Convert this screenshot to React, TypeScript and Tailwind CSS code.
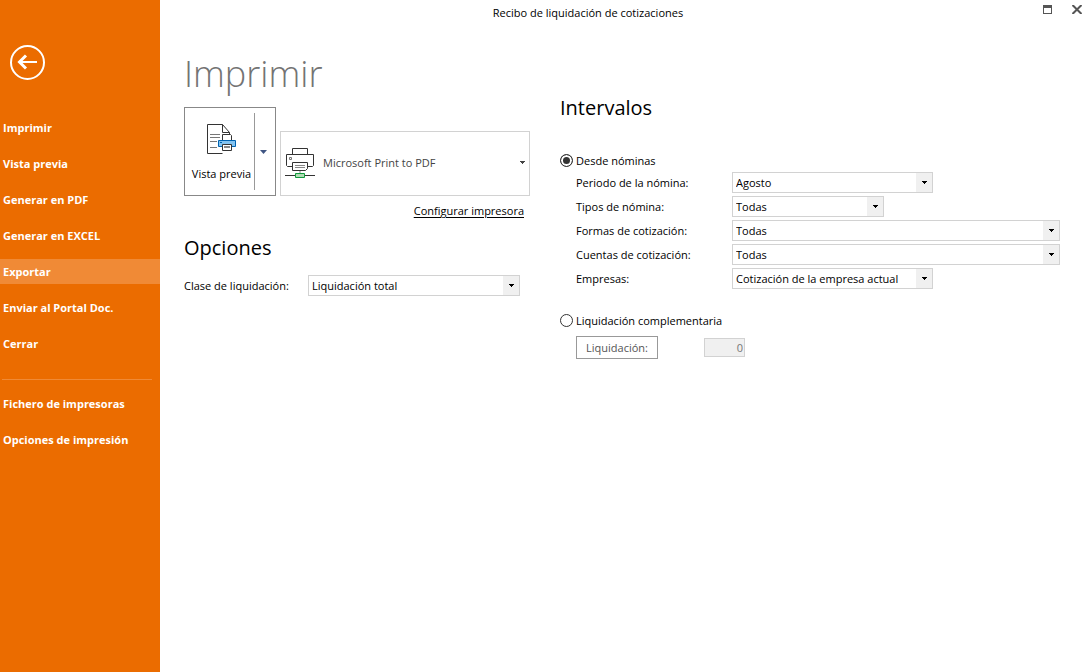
import type { ReactNode } from "react";

const mainLinks = [
  "Imprimir",
  "Vista previa",
  "Generar en PDF",
  "Generar en EXCEL",
  "Exportar",
  "Enviar al Portal Doc.",
  "Cerrar",
];

const setupLinks = ["Fichero de impresoras", "Opciones de impresión"];

const filters = [
  { id: "periodo", label: "Periodo de la nómina:", value: "Agosto", width: "w-[201px]" },
  { id: "tipos", label: "Tipos de nómina:", value: "Todas", width: "w-[152px]" },
  { id: "formas", label: "Formas de cotización:", value: "Todas", width: "w-full" },
  { id: "cuentas", label: "Cuentas de cotización:", value: "Todas", width: "w-full" },
  { id: "empresas", label: "Empresas:", value: "Cotización de la empresa actual", width: "w-[201px]" },
];

function Arrow({ className = "" }: { className?: string }) {
  return (
    <svg className={className} width="5" height="3" viewBox="0 0 5 3" fill="currentColor" shapeRendering="crispEdges" aria-hidden="true">
      <path d="M0 0h5v1H4v1H3v1H2V2H1V1H0z" />
    </svg>
  );
}

function Combo({ id, value, width }: { id: string; value: string; width: string }) {
  return (
    <div className={`relative flex h-[21px] border border-[#d2d2d2] bg-white ${width}`}>
      <select id={id} className="min-w-0 flex-1 appearance-none bg-transparent pl-[3px] pr-5 leading-[19px] outline-none">
        <option>{value}</option>
      </select>
      <span className="pointer-events-none absolute inset-y-0 right-0 flex w-4 items-center justify-center bg-[#f0f0f0]">
        <Arrow />
      </span>
    </div>
  );
}

function SideLink({ label, active = false }: { label: string; active?: boolean }) {
  return (
    <li>
      <a href="#" className={`block h-[25px] pl-[3px] leading-[25px] ${active ? "bg-[#f08a36]" : ""}`}>
        {label}
      </a>
    </li>
  );
}

function Radio({ id, label, checked = false }: { id: string; label: string; checked?: boolean }) {
  return (
    <div className="flex h-4 items-start gap-[3px]">
      <input
        id={id}
        type="radio"
        name="intervalo"
        defaultChecked={checked}
        className="mt-px size-[13px] shrink-0 appearance-none rounded-full border border-[#333] bg-white checked:bg-[#333] checked:shadow-[inset_0_0_0_2px_#fff]"
      />
      <label htmlFor={id}>{label}</label>
    </div>
  );
}

function PreviewIcon() {
  return (
    <svg width="30" height="30" viewBox="0 0 30 30" fill="none" stroke="#333" aria-hidden="true">
      <path d="M15.5.5H.5v29h15M15.5.5v8h7zM22.5 8.5v3" fill="#fff" />
      <path d="M3 10.5h10M3 13.5h10M3 17.5h7M3 23.5h7" stroke="#777" />
      <path d="M15.5 16.5v-6h8l1 1v5" fill="#fff" />
      <path d="M11.5 16.5h17v6h-17z" fill="#83c3f0" stroke="#0063b1" />
      <path d="M13 18.5h2" stroke="#0063b1" />
      <path d="M15.5 20.5h9v6h-9z" fill="#fff" />
      <path d="M17 23h6" stroke="#888" strokeWidth="2" />
    </svg>
  );
}

function PrinterIcon() {
  return (
    <svg width="30" height="30" viewBox="0 0 30 30" fill="none" stroke="#333" aria-hidden="true">
      <path d="M7.5 6.5v-6h15v6" />
      <path d="M7.5 18.5h-5l-1-1v-11h27v11l-1 1h-5" />
      <path d="M4.5 9.5h2v2h-2z" stroke="#777" />
      <path d="M7.5 14.5h15v6l-2 2h-13z" fill="#fff" />
      <path d="M10 17.5h10M10 19.5h10M15 23v3" stroke="#888" />
      <path d="M0 27.5h30" />
      <path d="M10.5 25.5h9v4h-9z" fill="#b0dcb4" stroke="#109a3c" />
    </svg>
  );
}

function Heading({ children }: { children: ReactNode }) {
  return <h2 className="text-xl leading-7">{children}</h2>;
}

export default function App() {
  return (
    <div className="flex min-h-screen bg-white font-['Open_Sans','Noto_Sans',sans-serif] text-[11px] leading-4 text-black">
      <aside className="w-40 shrink-0 bg-[#eb6c00] font-bold text-white">
        <button type="button" aria-label="Volver" className="ml-[9px] mt-11 block">
          <svg width="37" height="37" viewBox="0 0 37 37" fill="none" stroke="#fff" strokeWidth="2" aria-hidden="true">
            <circle cx="18.5" cy="18.5" r="16.5" />
            <path d="M11 18h17" />
            <path d="M17 11.500L10.500 18l6.500 6.500" strokeWidth="3" />
          </svg>
        </button>
        <nav className="mt-[34px]">
          <ul className="flex flex-col gap-[11px]">
            {mainLinks.map((label) => (
              <SideLink key={label} label={label} active={label === "Exportar"} />
            ))}
          </ul>
          <hr className="mb-[11px] ml-0.5 mr-2 mt-[23px] border-[#f08a36]" />
          <ul className="flex flex-col gap-[11px]">
            {setupLinks.map((label) => (
              <SideLink key={label} label={label} />
            ))}
          </ul>
        </nav>
      </aside>

      <div className="flex min-w-0 flex-1 flex-col">
        <header className="flex h-[26px]">
          <p className="flex-1 text-center leading-[26px]">Recibo de liquidación de cotizaciones</p>
          <div className="flex w-[72px] items-start justify-end gap-5 pr-1.5 pt-[5px]">
            <button type="button" aria-label="Maximizar">
              <svg width="9" height="9" viewBox="0 0 9 9" fill="none" stroke="#555" shapeRendering="crispEdges" aria-hidden="true">
                <path d="M.5.5h8v8h-8zM0 1.500h9M0 2.500h9" />
              </svg>
            </button>
            <button type="button" aria-label="Cerrar ventana">
              <svg width="10" height="9" viewBox="0 0 10 9" stroke="#555" strokeWidth="2" aria-hidden="true">
                <path d="M.5 0l9 9M9.500 0l-9 9" />
              </svg>
            </button>
          </div>
        </header>

        <main className="flex gap-[30px] pl-6 pr-7">
          <section className="w-[346px] shrink-0 pt-6">
            <h1 className="text-4xl leading-12 font-light text-[#737373]">Imprimir</h1>

            <div className="mt-[9px] flex items-end gap-1">
              <div className="flex h-[89px] w-[92px] shrink-0 border border-[#888] py-[5px]">
                <button type="button" className="flex flex-1 flex-col items-center justify-center gap-3 whitespace-nowrap border-r border-[#999] pl-1 pt-0.5">
                  <PreviewIcon />
                  Vista previa
                </button>
                <button type="button" aria-label="Más opciones de vista previa" className="flex w-5 items-center justify-center pr-[3px] text-[#3f5583]">
                  <svg width="7" height="4" viewBox="0 0 7 4" fill="currentColor" aria-hidden="true">
                    <path d="M0 0h7L3.500 4z" />
                  </svg>
                </button>
              </div>
              <div className="relative flex h-[65px] flex-1 items-center gap-2 border border-[#d2d2d2] pb-0.5 pl-1">
                <PrinterIcon />
                <select aria-label="Impresora" className="h-full min-w-0 flex-1 appearance-none text-[11px] text-[#444] outline-none">
                  <option>Microsoft Print to PDF</option>
                </select>
                <Arrow className="pointer-events-none absolute right-1 text-[#444]" />
              </div>
            </div>

            <div className="mt-[7px] pr-1.5 text-right">
              <a href="#" className="underline underline-offset-2">
                Configurar impresora
              </a>
            </div>

            <div className="mt-[15px]">
              <Heading>Opciones</Heading>
            </div>
            <div className="mt-[13px] flex items-center">
              <label htmlFor="clase" className="w-[124px]">
                Clase de liquidación:
              </label>
              <Combo id="clase" value="Liquidación total" width="w-[212px]" />
            </div>
          </section>

          <section className="min-w-0 flex-1 pt-[68px]">
            <Heading>Intervalos</Heading>
            <div className="mt-[31px]">
              <Radio id="nominas" label="Desde nóminas" checked />
            </div>
            <div className="mt-[3px] flex flex-col gap-[3px] pl-4">
              {filters.map((filter) => (
                <div key={filter.id} className="flex items-center">
                  <label htmlFor={filter.id} className="w-[156px] shrink-0">
                    {filter.label}
                  </label>
                  <Combo id={filter.id} value={filter.value} width={filter.width} />
                </div>
              ))}
            </div>
            <div className="mt-6">
              <Radio id="complementaria" label="Liquidación complementaria" />
            </div>
            <div className="mt-[7px] flex items-center pl-4">
              <button type="button" className="h-[23px] w-[82px] border border-[#999] text-[#555]">
                Liquidación:
              </button>
              <input
                type="text"
                aria-label="Número de liquidación"
                defaultValue="0"
                disabled
                className="ml-[46px] h-[19px] w-[41px] border border-[#d2d2d2] bg-[#f0f0f0] pr-px text-right text-[#777]"
              />
            </div>
          </section>
        </main>
      </div>
    </div>
  );
}
